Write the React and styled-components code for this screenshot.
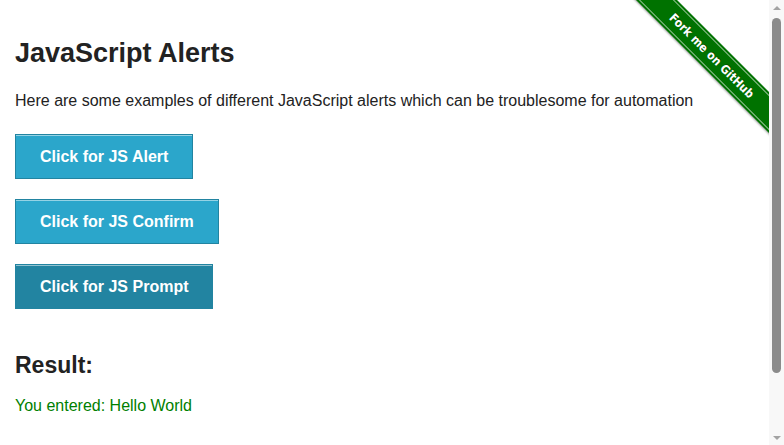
import React, { useState } from 'react';
import styled, { createGlobalStyle } from 'styled-components';

const GlobalStyle = createGlobalStyle`
  html, body {
    margin: 0;
    padding: 0;
    background: #fff;
  }
  body {
    font-family: "Liberation Sans", Arial, Helvetica, sans-serif;
    color: #222;
  }
`;

const Window = styled.div`
  display: flex;
  height: 100vh;
  overflow: hidden;
`;

const Viewport = styled.div`
  position: relative;
  flex: 1;
  overflow: hidden;
`;

const Page = styled.div`
  padding: 37px 15px 102px;
`;

const Title = styled.h3`
  margin: 0 0 19px;
  font-size: 27px;
  line-height: 32px;
  font-weight: bold;
  color: #222;
`;

const Intro = styled.p`
  margin: 0 0 20px;
  font-size: 16px;
  line-height: 26px;
`;

const ButtonList = styled.ul`
  list-style: none;
  margin: 0;
  padding: 0;
  display: flex;
  flex-direction: column;
  align-items: flex-start;
  gap: 20px;
`;

const AlertButton = styled.button`
  display: block;
  box-sizing: border-box;
  height: 45px;
  padding: 0 24px;
  border: 1px solid #2284a1;
  background: ${({ $active }) => ($active ? '#2284a1' : '#2ba6cb')};
  box-shadow: inset 0 1px 0 rgba(255, 255, 255, 0.5);
  color: #fff;
  font-family: "Liberation Sans", Arial, Helvetica, sans-serif;
  font-size: 16px;
  font-weight: bold;
  line-height: 16px;
  cursor: pointer;
`;

const ResultTitle = styled.h4`
  margin: 42px 0 0;
  font-size: 23px;
  line-height: 28px;
  font-weight: bold;
  color: #222;
`;

const ResultText = styled.p`
  margin: 14px 0 0;
  font-size: 16px;
  line-height: 26px;
  color: green;
`;

const Ribbon = styled.a`
  position: absolute;
  top: 0;
  right: 0;
  width: 149px;
  height: 149px;
  overflow: hidden;
  text-decoration: none;
`;

const Band = styled.span`
  position: absolute;
  left: -8px;
  top: 41px;
  width: 200px;
  height: 29px;
  transform: rotate(45deg);
  background: #007200;
  box-shadow: 0 1px 2px rgba(0, 0, 0, 0.35);
  display: flex;
  align-items: center;
  justify-content: center;
  color: #fff;
  font-family: "DejaVu Sans Condensed", "DejaVu Sans", sans-serif;
  font-stretch: condensed;
  font-size: 12px;
  font-weight: bold;
  text-shadow: 0 -1px 0 rgba(0, 0, 0, 0.35);

  &::before {
    content: '';
    position: absolute;
    left: 0;
    right: 0;
    top: 2px;
    bottom: 2px;
    border-top: 1px solid rgba(255, 255, 255, 0.55);
    border-bottom: 1px solid rgba(255, 255, 255, 0.55);
  }
`;

// fake classic scrollbar, the page is taller than the window
const Rail = styled.div`
  width: 15px;
  flex: none;
  display: flex;
  flex-direction: column;
  align-items: center;
  background: #f8f8f8;
`;

const Arrow = styled.div`
  height: 15px;
  width: 15px;
  display: flex;
  align-items: center;
  justify-content: center;
  margin-top: ${({ $down }) => ($down ? 'auto' : '0')};

  &::after {
    content: '';
    width: 0;
    height: 0;
    border-left: 4px solid transparent;
    border-right: 4px solid transparent;
    ${({ $down }) => ($down
    ? 'border-top: 4px solid #a3a3a3;'
    : 'border-bottom: 4px solid #a3a3a3;')}
  }
`;

const Thumb = styled.div`
  margin-top: 3px;
  width: 9px;
  height: 355px;
  border-radius: 5px;
  background: #8b8b8b;
`;

export default function App() {
  const [result] = useState('You entered: Hello World');
  const buttons = ['Click for JS Alert', 'Click for JS Confirm', 'Click for JS Prompt'];

  return (
    <>
      <GlobalStyle />
      <Window>
        <Viewport>
          <Page>
            <Title>JavaScript Alerts</Title>
            <Intro>
              Here are some examples of different JavaScript alerts which can be troublesome for automation
            </Intro>
            <ButtonList>
              {buttons.map((b, i) => (
                <li key={b}>
                  <AlertButton type="button" $active={i === 2}>{b}</AlertButton>
                </li>
              ))}
            </ButtonList>
            <ResultTitle>Result:</ResultTitle>
            <ResultText>{result}</ResultText>
          </Page>
          <Ribbon href="#">
            <Band>Fork me on GitHub</Band>
          </Ribbon>
        </Viewport>
        <Rail>
          <Arrow />
          <Thumb />
          <Arrow $down />
        </Rail>
      </Window>
    </>
  );
}
